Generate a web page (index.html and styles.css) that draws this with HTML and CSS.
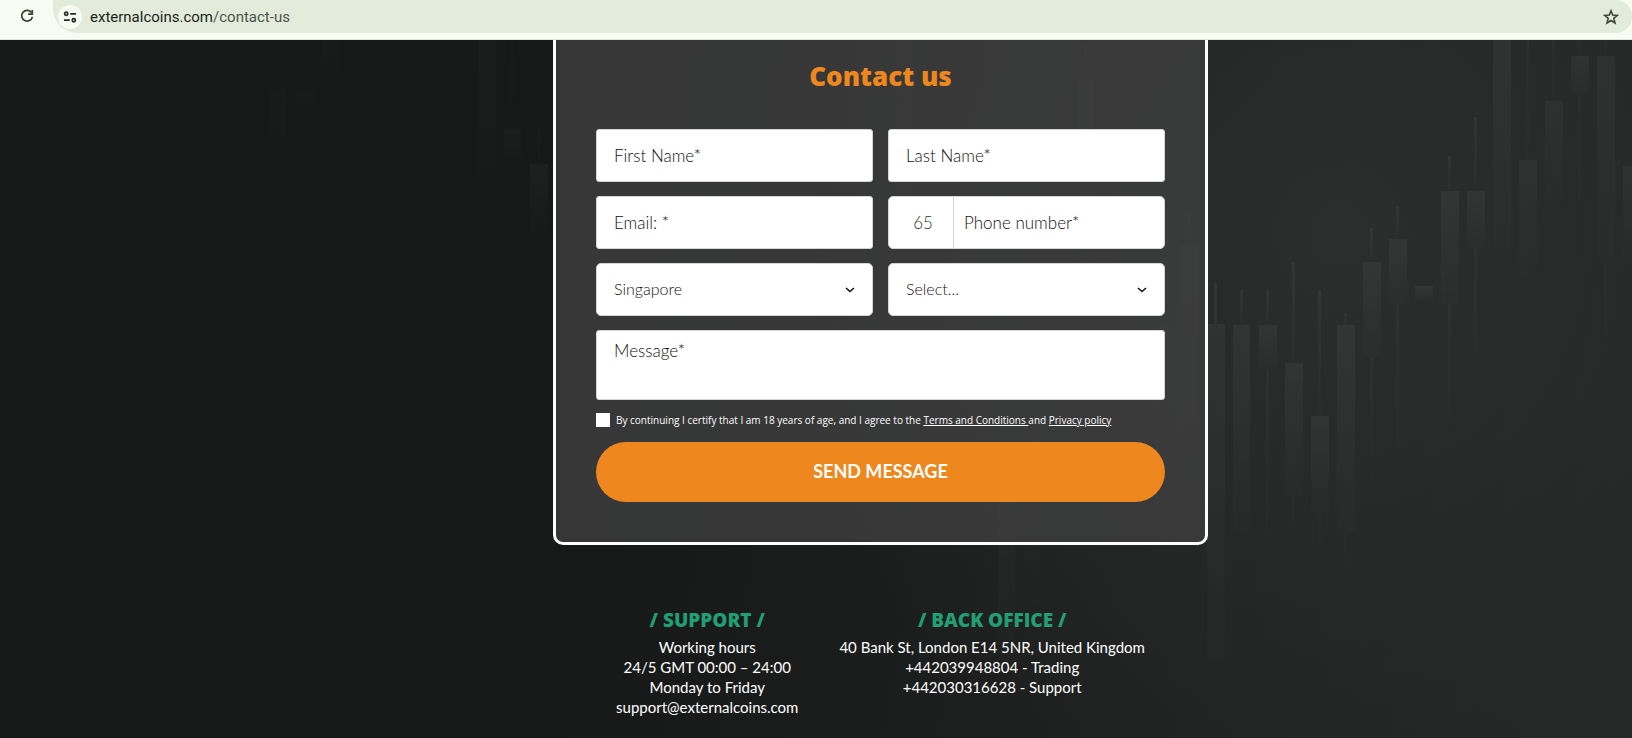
FILE: index.html
```html
<!DOCTYPE html>
<html lang="en">
<head>
<meta charset="utf-8">
<title>Contact us</title>
<link rel="stylesheet" href="styles.css">
</head>
<body>
<header class="browser-bar">
  <button class="icon-button" type="button" aria-label="Reload">
    <svg width="16" height="16" viewBox="0 0 16 16" fill="none" stroke="#33452f" stroke-width="1.7"><path d="M12.6 4.7A5.4 5.4 0 1 0 13.4 8.8"/><path d="M13.3 2v4.2H9.1"/></svg>
  </button>
  <div class="address">
    <button class="site-info" type="button" aria-label="Site information">
      <svg width="14" height="14" viewBox="0 0 14 14" fill="none" stroke="#20301f" stroke-width="1.7"><circle cx="3.2" cy="3.8" r="1.6"/><path d="M7.2 3.8H13M1 10.2h5.8"/><circle cx="10.8" cy="10.2" r="1.6"/></svg>
    </button>
    <span class="url">externalcoins.com<span class="url-path">/contact-us</span></span>
    <button class="icon-button" type="button" aria-label="Bookmark this tab">
      <svg width="16" height="16" viewBox="0 0 16 16" fill="none" stroke="#3c483a" stroke-width="1.6"><path d="M8 1.8l1.7 4.3 4.7.3-3.6 3 1.2 4.6L8 11.5 4 14l1.2-4.6-3.6-3 4.7-.3z"/></svg>
    </button>
  </div>
</header>

<main class="page">
  <svg class="chart" viewBox="0 0 1632 698" preserveAspectRatio="xMaxYMin slice" aria-hidden="true">
    <defs>
      <linearGradient id="fade" x1="0" y1="0" x2="0" y2="1">
        <stop offset="0" stop-color="#fff" stop-opacity=".045"/>
        <stop offset="1" stop-color="#fff" stop-opacity=".008"/>
      </linearGradient>
    </defs>
    <g fill="url(#fade)">
      <path d="M1207 284h18v336h-18zM1214 243h3v41h-3z"/>
      <path d="M1233 285h17v208h-17z"/><path d="M1240 250h3v35h-3z"/>
      <path d="M1259 285h18v44h-18z"/><path d="M1266 250h3v35h-3z"/><path d="M1266 329h3v185h-3z" opacity=".6"/>
      <path d="M1285 323h18v133h-18z"/><path d="M1292 222h3v101h-3z"/><path d="M1292 456h3v40h-3z" opacity=".3"/>
      <path d="M1311 376h18v96h-18z"/><path d="M1318 250h3v126h-3z"/><path d="M1318 472h3v55h-3z" opacity=".3"/>
      <path d="M1337 285h18v208h-18z"/><path d="M1344 273h3v12h-3z"/><path d="M1344 493h3v40h-3z" opacity=".3"/>
      <path d="M1363 222h18v95h-18z"/><path d="M1370 188h3v34h-3z"/><path d="M1370 317h3v124h-3z" opacity=".6"/>
      <path d="M1389 199h18v65h-18z"/><path d="M1396 166h3v33h-3z"/><path d="M1396 264h3v159h-3z" opacity=".6"/>
      <path d="M1415 246h18v15h-18z"/>
      <path d="M1441 151h18v113h-18z"/><path d="M1448 116h3v35h-3z"/><path d="M1448 264h3v128h-3z" opacity=".6"/>
      <path d="M1467 151h18v58h-18z"/><path d="M1474 77h3v74h-3z"/><path d="M1474 209h3v124h-3z" opacity=".6"/>
      <path d="M1493 -30h18v239h-18z"/>
      <path d="M1519 120h18v118h-18z" opacity=".7"/><path d="M1526 -30h3v150h-3z" opacity=".7"/>
      <path d="M1545 61h18v105h-18z" opacity=".7"/><path d="M1552 -30h3v91h-3z" opacity=".7"/>
      <path d="M1571 16h18v39h-18z"/><path d="M1578 -30h3v46h-3z"/><path d="M1578 55h3v161h-3z" opacity=".4"/>
      <path d="M1597 16h18v207h-18z" opacity=".8"/><path d="M1604 -30h3v46h-3z"/><path d="M1604 223h3v100h-3z" opacity=".4"/>
      <path d="M1623 126h18v96h-18z" opacity=".8"/>
      <path d="M1181 205h17v240h-17z"/><path d="M1188 173h3v32h-3z"/>
      <path d="M1155 285h17v180h-17z" opacity=".6"/>
      <path d="M1077 39h17v180h-17z"/><path d="M1084 4h3v35h-3z"/>
      <path d="M998 430h17v200h-17z" opacity=".7"/><path d="M1024 285h17v280h-17z" opacity=".5"/>
      <path d="M895 -30h17v220h-17z" opacity=".5"/>
      <path d="M478 -30h18v190h-18z" opacity=".5"/>
      <path d="M504 89h17v33h-17z" opacity=".5"/><path d="M511 -30h2v119h-2z" opacity=".4"/>
      <path d="M530 124h18v69h-18z" opacity=".7"/><path d="M538 89h2v35h-2z" opacity=".5"/>
      <path d="M269 49h18v155h-18z" opacity=".2"/><path d="M296 49h17v70h-17z" opacity=".2"/><path d="M321 -30h18v185h-18z" opacity=".2"/>
      <path d="M244 89h17v200h-17zM218 189h17v130h-17z" opacity=".15"/>
    </g>
  </svg>

  <div class="content">
    <form class="card">
      <h1 class="card-title">Contact us</h1>
      <div class="fields">
        <input class="field" type="text" placeholder="First Name*" aria-label="First Name">
        <input class="field" type="text" placeholder="Last Name*" aria-label="Last Name">
        <input class="field" type="email" placeholder="Email: *" aria-label="Email">
        <div class="phone">
          <input class="phone-code" type="text" value="65" aria-label="Country code">
          <input class="phone-number" type="tel" placeholder="Phone number*" aria-label="Phone number">
        </div>
        <div class="picker">
          <select class="field select" aria-label="Country"><option>Singapore</option></select>
          <svg class="chevron" width="10" height="6" viewBox="0 0 10 6" fill="none" stroke="#111" stroke-width="1.5"><path d="M1 1l4 3.5L9 1"/></svg>
        </div>
        <div class="picker">
          <select class="field select" aria-label="Subject"><option>Select...</option></select>
          <svg class="chevron" width="10" height="6" viewBox="0 0 10 6" fill="none" stroke="#111" stroke-width="1.5"><path d="M1 1l4 3.5L9 1"/></svg>
        </div>
        <textarea class="field message" placeholder="Message*" aria-label="Message"></textarea>
      </div>
      <div class="consent">
        <input class="tick" type="checkbox" id="agree">
        <label for="agree">By continuing I certify that I am 18 years of age, and I agree to the <a href="#terms">Terms and Conditions </a>and <a href="#privacy">Privacy policy</a></label>
      </div>
      <button class="send" type="submit">SEND MESSAGE</button>
    </form>

    <div class="offices">
      <section class="office">
        <h2 class="office-title">/ SUPPORT /</h2>
        <p>Working hours</p>
        <p>24/5 GMT 00:00 – 24:00</p>
        <p>Monday to Friday</p>
        <p>support@externalcoins.com</p>
      </section>
      <section class="office">
        <h2 class="office-title">/ BACK OFFICE /</h2>
        <p>40 Bank St, London E14 5NR, United Kingdom</p>
        <p>+442039948804 - Trading</p>
        <p>+442030316628 - Support</p>
      </section>
    </div>
  </div>
</main>
</body>
</html>
```
FILE: styles.css
```css
* {
  box-sizing: border-box;
}

body {
  margin: 0;
  min-height: 100vh;
  display: flex;
  flex-direction: column;
  background: #171918;
  color: #fff;
  font-family: Lato, "Open Sans", sans-serif;
}

button,
input,
select,
textarea {
  font: inherit;
}

.browser-bar {
  display: flex;
  align-items: flex-start;
  height: 40px;
  padding-left: 19px;
  background: #f8fbf1;
  border-bottom: 1px solid #dfe6d8;
}

.icon-button {
  display: flex;
  padding: 8px 0;
  border: 0;
  background: none;
}

.address {
  flex: 1;
  display: flex;
  align-items: center;
  height: 33px;
  margin-left: 18px;
  padding: 0 13px 0 5px;
  border-radius: 0 16px 16px 24px;
  background: #e3ecdb;
}

.site-info {
  display: flex;
  padding: 5px;
  border: 0;
  border-radius: 50%;
  background: #f8fbf1;
}

.url {
  flex: 1;
  margin-left: 8px;
  color: #1b1f1a;
  font: 15px/32px Roboto, sans-serif;
}

.url-path {
  color: #4b534a;
}

.page {
  position: relative;
  flex: 1;
  overflow: hidden;
  background:
    radial-gradient(ellipse 560px 620px at 82% 28%, #2a2e2d 0%, rgba(42, 46, 45, 0) 100%),
    linear-gradient(100deg, #171918 38%, #262827 100%);
}

.chart {
  position: absolute;
  inset: 0;
  width: 100%;
  height: 100%;
}

.content {
  position: relative;
  display: flex;
  flex-direction: column;
  align-items: center;
  padding: 0 0 16px 129px;
}

.card {
  width: 100%;
  max-width: 655px;
  padding: 17px 40px 40px;
  border: 3px solid #fff;
  border-top: 0;
  border-radius: 0 0 10px 10px;
  background: rgba(62, 63, 62, .8);
}

.card-title {
  margin: 0 0 33px;
  color: #ee871d;
  font: 800 26px/39px "Open Sans", sans-serif;
  text-align: center;
}

.fields {
  display: grid;
  grid-template-columns: repeat(2, minmax(0, 1fr));
  gap: 14px 15px;
}

.field,
.phone {
  width: 100%;
  height: 53px;
  border: 1px solid #d4d4d4;
  border-radius: 3px;
  background: #fff;
}

.field {
  padding: 0 17px;
  color: #111;
  font-size: 17px;
  font-weight: 300;
}

.field::placeholder,
.phone-number::placeholder {
  color: #111;
  opacity: 1;
}

.phone {
  display: flex;
  border-radius: 5px;
}

.phone-code,
.phone-number {
  min-width: 0;
  border: 0;
  background: none;
  color: #111;
  font-size: 17px;
  font-weight: 300;
}

.phone-code {
  width: 65px;
  padding: 0 0 0 4px;
  border-right: 1px solid #d4d4d4;
  color: #333;
  text-align: center;
}

.phone-number {
  flex: 1;
  padding: 0 10px;
}

.picker {
  display: grid;
  align-items: center;
}

.picker > * {
  grid-area: 1 / 1;
}

.select {
  appearance: none;
  padding-bottom: 2px;
  border-radius: 5px;
  font-size: 16px;
}

.chevron {
  justify-self: end;
  margin-right: 18px;
  pointer-events: none;
}

.message {
  grid-column: 1 / -1;
  height: 70px;
  padding: 8px 17px;
  line-height: 24px;
  resize: none;
  display: block;
}

.consent {
  display: flex;
  align-items: center;
  gap: 6px;
  margin: 12px 0 14px;
  font: 10px/16px "Open Sans", sans-serif;
}

.consent a {
  color: inherit;
}

.tick {
  appearance: none;
  width: 14px;
  height: 14px;
  margin: 0;
  background: #fff;
}

.send {
  display: block;
  width: 100%;
  height: 60px;
  padding: 0 0 2px;
  border: 0;
  border-radius: 30px;
  background: #ee871d;
  color: #fff;
  font-size: 18px;
  font-weight: 700;
}

.offices {
  display: flex;
  justify-content: center;
  gap: 41px;
  padding-top: 63px;
}

.office {
  font-size: 15px;
  line-height: 20px;
  text-align: center;
}

.office p {
  margin: 0;
}

.office-title {
  margin: 0 0 5px;
  color: #239d74;
  font: 800 19px/24px "Open Sans", sans-serif;
}
```
